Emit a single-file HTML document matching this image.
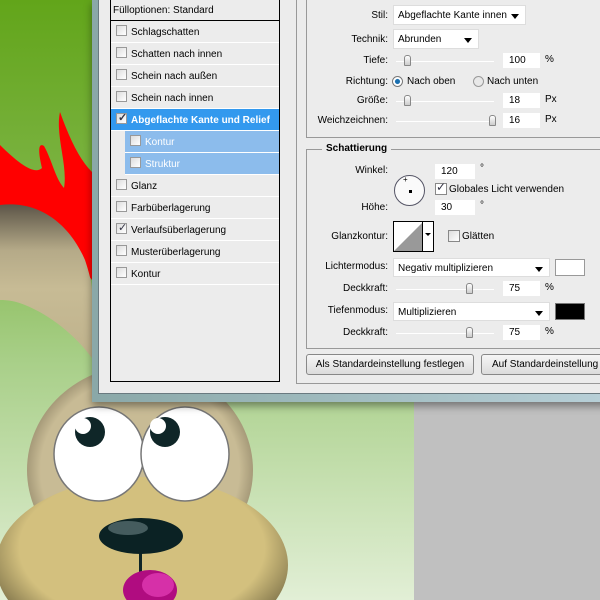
<!DOCTYPE html>
<html><head><meta charset="utf-8"><style>
*{margin:0;padding:0;box-sizing:border-box}
body{width:600px;height:600px;overflow:hidden;position:relative;font-family:"Liberation Sans",sans-serif;font-size:10px;color:#000;background:#c0c0c0}
.a{position:absolute}
.lbl{position:absolute;text-align:right;width:120px;font-size:10px}
.inp{position:absolute;background:#fff;height:15px;font-size:10px;padding:2px 0 0 6px}
.dd{position:absolute;background:#fff;border:1px solid #ddd;font-size:10px;padding:4px 0 0 4px;height:20px}
.dd:after{content:"";position:absolute;right:6px;top:8px;border:4px solid transparent;border-top:5px solid #000;border-bottom:0}
.sl{position:absolute;height:1px;background:#aaa;border-bottom:1px solid #fff}
.kn{position:absolute;width:7px;height:11px;background:linear-gradient(#fff,#ccc);border:1px solid #888;border-radius:3px 3px 1px 1px;top:-6px}
.row{position:absolute;left:0;width:168px;height:22px;border-bottom:1px solid #fff;font-size:10px;padding:6px 0 0 20px}
.cb{position:absolute;left:5px;top:4px;width:11px;height:11px;border:1px solid #999;background:linear-gradient(135deg,#ddd,#fff)}
.ck:after{content:"✓";position:absolute;left:1px;top:-3px;font-size:11px;color:#334}
.btn{position:absolute;height:21px;border:1px solid #888;border-radius:3px;background:linear-gradient(#f6f6f6,#dcdcdc);font-size:10px;text-align:center;padding-top:4px}
</style></head><body>
<svg class="a" style="left:0;top:0" width="600" height="600">
<defs>
<linearGradient id="bg" x1="0" y1="0" x2="0" y2="1"><stop offset="0" stop-color="#62a51a"/><stop offset=".35" stop-color="#7fb548"/><stop offset=".6" stop-color="#a8cf88"/><stop offset="1" stop-color="#e2efd6"/></linearGradient>
<linearGradient id="ear" x1="0" y1="0" x2="0" y2="1"><stop offset="0" stop-color="#5c5548"/><stop offset=".3" stop-color="#b5aa88"/><stop offset=".55" stop-color="#c7bb95"/><stop offset="1" stop-color="#bfb28c"/></linearGradient>
<radialGradient id="mz" cx=".5" cy=".4" r=".6"><stop offset=".7" stop-color="#d3c07e"/><stop offset="1" stop-color="#6e6440"/></radialGradient>
<radialGradient id="hd" cx=".5" cy=".5" r=".55"><stop offset=".8" stop-color="#c8bb95"/><stop offset="1" stop-color="#8a7f62"/></radialGradient>
</defs>
<rect width="600" height="600" fill="url(#bg)"/>
<rect x="414" y="400" width="186" height="200" fill="#c0c0c0"/>
<path d="M0 145 C20 165 35 175 42 168 C38 152 38 142 44 146 C52 160 55 178 64 188 C68 165 55 135 60 112 C70 140 80 160 92 172 L92 280 C85 272 82 255 72 245 L0 215Z" fill="#ff0000"/>
<path d="M0 205 C40 200 70 225 85 260 C90 275 92 285 92 290 L92 358 C75 335 50 315 25 305 C15 301 8 300 0 300 Z" fill="url(#ear)"/>
<ellipse cx="140" cy="470" rx="113" ry="105" fill="url(#hd)"/>
<ellipse cx="142" cy="565" rx="146" ry="88" fill="url(#mz)"/>
<ellipse cx="99" cy="454" rx="45" ry="47" fill="#fff" stroke="#777" stroke-width="1.5"/>
<ellipse cx="185" cy="454" rx="44" ry="47" fill="#fff" stroke="#777" stroke-width="1.5"/>
<circle cx="90" cy="432" r="15" fill="#0f2628"/><circle cx="83" cy="426" r="8" fill="#fff"/>
<circle cx="165" cy="432" r="15" fill="#0f2628"/><circle cx="158" cy="426" r="8" fill="#fff"/>
<rect x="139" y="550" width="3" height="22" fill="#0f2628"/>
<ellipse cx="141" cy="536" rx="42" ry="18" fill="#0b2224"/>
<ellipse cx="128" cy="528" rx="20" ry="7" fill="#6c8486" opacity=".6"/>
<ellipse cx="150" cy="590" rx="27" ry="20" fill="#b00c80"/>
<ellipse cx="158" cy="585" rx="16" ry="12" fill="#d630a8"/>
</svg>
<div class="a" style="left:92px;top:0;width:520px;height:402px;background:linear-gradient(90deg,#8aa8a8,#b8d0d8);box-shadow:0 4px 8px rgba(0,0,0,.4)"></div>
<div class="a" style="left:98px;top:0;width:510px;height:394px;background:#ececec;border-left:1px solid #6a7a80;border-bottom:1px solid #6a7a80"></div>
<div class="a" style="left:110px;top:-2px;width:170px;height:384px;border:1px solid #000;background:#ececec">
 <div class="row" style="top:2px;height:20px;padding:4px 0 0 2px;border-bottom:1px solid #000">Fülloptionen: Standard</div>
 <div class="row" style="top:22px"><span class="cb"></span>Schlagschatten</div>
 <div class="row" style="top:44px"><span class="cb"></span>Schatten nach innen</div>
 <div class="row" style="top:66px"><span class="cb"></span>Schein nach außen</div>
 <div class="row" style="top:88px"><span class="cb"></span>Schein nach innen</div>
 <div class="row" style="top:110px;background:#3399ee;color:#fff;font-weight:bold"><span class="cb ck"></span>Abgeflachte Kante und Relief</div>
 <div class="row" style="top:132px;left:14px;width:154px;background:#8cbcec;color:#fff"><span class="cb"></span>Kontur</div>
 <div class="row" style="top:154px;left:14px;width:154px;background:#8cbcec;color:#fff"><span class="cb"></span>Struktur</div>
 <div class="row" style="top:176px"><span class="cb"></span>Glanz</div>
 <div class="row" style="top:198px"><span class="cb"></span>Farbüberlagerung</div>
 <div class="row" style="top:220px"><span class="cb ck"></span>Verlaufsüberlagerung</div>
 <div class="row" style="top:242px"><span class="cb"></span>Musterüberlagerung</div>
 <div class="row" style="top:264px"><span class="cb"></span>Kontur</div>
</div>
<div class="a" style="left:296px;top:-2px;width:310px;height:386px;border:1px solid #999"></div>
<div class="a" style="left:306px;top:-2px;width:300px;height:140px;border:1px solid #999"></div>
<div class="a" style="left:306px;top:149px;width:300px;height:200px;border:1px solid #999"></div>
<div class="a" style="left:322px;top:143px;background:#ececec;padding:0 4px;font-weight:bold;font-size:10px">Schattierung</div>

<div class="lbl" style="left:268px;top:10px">Stil:</div>
<div class="dd" style="left:393px;top:5px;width:133px">Abgeflachte Kante innen</div>
<div class="lbl" style="left:268px;top:34px">Technik:</div>
<div class="dd" style="left:393px;top:29px;width:86px">Abrunden</div>
<div class="lbl" style="left:268px;top:55px">Tiefe:</div>
<div class="sl" style="left:396px;top:61px;width:98px"><div class="kn" style="left:8px"></div></div>
<div class="inp" style="left:503px;top:53px;width:37px">100</div><div class="a" style="left:545px;top:54px">%</div>
<div class="lbl" style="left:268px;top:76px">Richtung:</div>
<div class="a" style="left:392px;top:76px;width:11px;height:11px;border-radius:50%;border:1px solid #777;background:radial-gradient(#1a6fb0 35%,#fff 45%)"></div>
<div class="a" style="left:407px;top:76px">Nach oben</div>
<div class="a" style="left:473px;top:76px;width:11px;height:11px;border-radius:50%;border:1px solid #999;background:#e8e8e8"></div>
<div class="a" style="left:487px;top:76px">Nach unten</div>
<div class="lbl" style="left:268px;top:95px">Größe:</div>
<div class="sl" style="left:396px;top:101px;width:98px"><div class="kn" style="left:8px"></div></div>
<div class="inp" style="left:503px;top:93px;width:37px">18</div><div class="a" style="left:545px;top:94px">Px</div>
<div class="lbl" style="left:268px;top:115px">Weichzeichnen:</div>
<div class="sl" style="left:396px;top:121px;width:98px"><div class="kn" style="left:93px"></div></div>
<div class="inp" style="left:503px;top:113px;width:37px">16</div><div class="a" style="left:545px;top:114px">Px</div>

<div class="lbl" style="left:268px;top:165px">Winkel:</div>
<div class="inp" style="left:435px;top:164px;width:40px">120</div><div class="a" style="left:480px;top:163px">°</div>
<div class="a" style="left:394px;top:175px;width:31px;height:31px;border-radius:50%;border:1px solid #556;background:#fafafa"></div>
<div class="a" style="left:403px;top:175px;font-size:8px">+</div>
<div class="a" style="left:409px;top:190px;width:3px;height:3px;background:#000"></div>
<div class="a" style="left:435px;top:183px;width:12px;height:12px;border:1px solid #888;background:#fff"></div>
<div class="a" style="left:436px;top:180px;font-size:12px;color:#334">✓</div>
<div class="a" style="left:449px;top:184px">Globales Licht verwenden</div>
<div class="lbl" style="left:268px;top:202px">Höhe:</div>
<div class="inp" style="left:435px;top:200px;width:40px">30</div><div class="a" style="left:480px;top:200px">°</div>
<div class="lbl" style="left:268px;top:231px">Glanzkontur:</div>
<svg class="a" style="left:393px;top:221px" width="41" height="31"><rect x=".5" y=".5" width="40" height="30" fill="#fff" stroke="#000"/><path d="M1 30 L29 2 L29 30Z" fill="#999"/><line x1="29.5" y1="0" x2="29.5" y2="31" stroke="#000"/><path d="M32 12h6l-3 3z" fill="#000"/></svg>
<div class="a" style="left:448px;top:230px;width:12px;height:12px;border:1px solid #888;background:linear-gradient(135deg,#ddd,#fff)"></div>
<div class="a" style="left:462px;top:231px">Glätten</div>
<div class="lbl" style="left:268px;top:261px">Lichtermodus:</div>
<div class="dd" style="left:393px;top:258px;width:157px;height:19px">Negativ multiplizieren</div>
<div class="a" style="left:555px;top:259px;width:30px;height:17px;background:#fff;border:1px solid #999"></div>
<div class="lbl" style="left:268px;top:283px">Deckkraft:</div>
<div class="sl" style="left:396px;top:289px;width:98px"><div class="kn" style="left:70px"></div></div>
<div class="inp" style="left:503px;top:281px;width:37px">75</div><div class="a" style="left:545px;top:282px">%</div>
<div class="lbl" style="left:268px;top:305px">Tiefenmodus:</div>
<div class="dd" style="left:393px;top:302px;width:157px;height:19px">Multiplizieren</div>
<div class="a" style="left:555px;top:303px;width:30px;height:17px;background:#000;border:1px solid #777"></div>
<div class="lbl" style="left:268px;top:327px">Deckkraft:</div>
<div class="sl" style="left:396px;top:333px;width:98px"><div class="kn" style="left:70px"></div></div>
<div class="inp" style="left:503px;top:325px;width:37px">75</div><div class="a" style="left:545px;top:326px">%</div>

<div class="btn" style="left:306px;top:354px;width:168px">Als Standardeinstellung festlegen</div>
<div class="btn" style="left:481px;top:354px;width:130px;text-align:left;padding-left:10px">Auf Standardeinstellung</div>
</body></html>
